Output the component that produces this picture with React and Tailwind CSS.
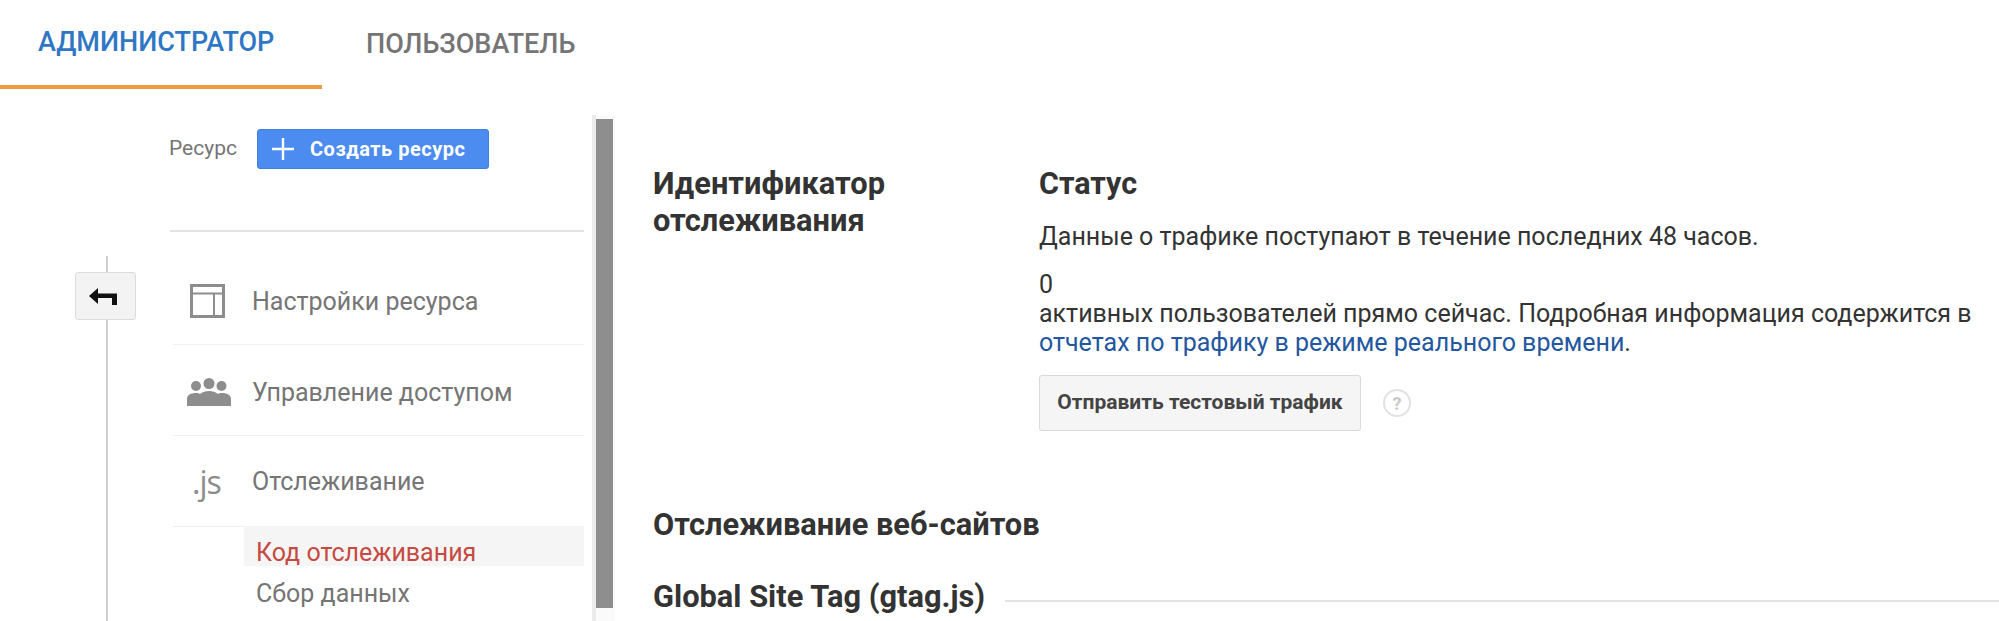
import React from "react";

function Row({ icon, label, pad, rowClass }) {
  return (
    <div className={`flex items-center border-b border-[#f0f0f0] ml-[3px] ${rowClass}`}>
      <div className={`flex w-[79px] shrink-0 justify-start ${pad}`}>{icon}</div>
      <span className="text-[25px] text-[#757575]">{label}</span>
    </div>
  );
}

export default function App() {
  return (
    <div className="font-['Roboto',sans-serif] h-[621px] w-[1999px] overflow-hidden bg-white">
      <div className="flex h-[89px]">
        <div className="flex h-[89px] w-[322px] items-center border-b-4 border-[#ed9d3e] pl-[38px] text-[27px] font-medium text-[#2f77c4]">
          АДМИНИСТРАТОР
        </div>
        <div className="flex h-[89px] items-center pl-[44px] text-[27px] font-medium text-[#757575]">
          ПОЛЬЗОВАТЕЛЬ
        </div>
      </div>

      <div className="flex h-[532px]">
        <div className="flex w-[170px] shrink-0 flex-col items-start pl-[75px] pt-[167px]">
          <div className="ml-[31px] h-[16px] w-[2px] shrink-0 bg-[#d0d0d0]" />
          <div className="flex h-[48px] w-[61px] shrink-0 items-center justify-center rounded-[3px] border border-[#dcdcdc] bg-[#f3f3f3]">
            <svg width="28" height="17" viewBox="0 0 28 17" className="mr-[6px]">
              <path d="M0 8 L9 0 V5.5 H28 V17 H23 V10 H9 V16 Z" fill="#111" />
            </svg>
          </div>
          <div className="ml-[31px] h-[400px] w-[2px] shrink-0 bg-[#d0d0d0]" />
        </div>

        <div className="w-[414px] shrink-0">
          <div className="flex h-[143px] flex-col border-b-2 border-[#e3e3e3]">
            <div className="flex items-center pt-[40px]">
              <span className="-ml-[1px] w-[88px] text-[21px] text-[#757575]">Ресурс</span>
              <div className="flex h-[40px] w-[232px] items-center rounded-[3px] border border-[#3f7fdd] bg-[#4c8bf0] pl-[13px]">
                <svg width="24" height="24" viewBox="0 0 24 24" className="shrink-0">
                  <path d="M12 1V23M1 12H23" stroke="#fff" strokeWidth="2.4" />
                </svg>
                <span className="ml-[15px] text-[20px] font-bold tracking-[0.5px] text-white">
                  Создать ресурс
                </span>
              </div>
            </div>
          </div>

          <Row
            rowClass="h-[113px] pt-[27px]"
            pad="pl-[17px]"
            label="Настройки ресурса"
            icon={
              <svg width="35" height="34" viewBox="0 0 35 34" className="-mt-[1px]">
                <path d="M1.5 1.5H33.5V32.5H1.5Z" fill="none" stroke="#8d8d8d" strokeWidth="3" />
                <path d="M2 9.5H33M24 9.5V32" fill="none" stroke="#8d8d8d" strokeWidth="2" />
              </svg>
            }
          />
          <Row
            rowClass="h-[91px] pt-[5px]"
            pad="pl-[14px]"
            label="Управление доступом"
            icon={
              <svg width="44" height="28" viewBox="0 0 44 28" className="-mt-[2px]">
                <circle cx="9" cy="8" r="5" fill="#8d8d8d" />
                <circle cx="22" cy="5.5" r="5.5" fill="#8d8d8d" />
                <circle cx="34.5" cy="8" r="5" fill="#8d8d8d" />
                <path d="M0 28V21C0 17 4 15 9 15C11 15 12 15.5 13 16C15 14 19 13 22 13C25 13 29 14 31 16C32 15.5 33 15 35 15C40 15 44 17 44 21V28Z" fill="#8d8d8d" />
              </svg>
            }
          />
          <Row
            rowClass="h-[91px] pt-[2px]"
            pad="pl-[19px]"
            label="Отслеживание"
            icon={<span className="font-['Open_Sans',sans-serif] text-[32px] leading-none tracking-[-1px] text-[#8d8d8d]">.js</span>}
          />

          <div className="-mt-[1px] ml-[74px] flex h-[40px] items-end bg-[#f5f5f5] pl-[12px]">
            <span className="text-[25px] leading-[26px] text-[#c64a42]">Код отслеживания</span>
          </div>
          <div className="ml-[86px] mt-[15px] text-[25px] leading-[26px] text-[#757575]">Сбор данных</div>
        </div>

        <div className="ml-[8px] w-[23px] shrink-0 pt-[26px]">
          <div className="h-full border-l-4 border-[#ececec] bg-[#fafafa] pt-[4px]">
            <div className="h-[489px] w-[17px] bg-[#8e8e8e]" />
          </div>
        </div>

        <div className="min-w-0 flex-1 pl-[38px]">
          <div className="flex pt-[75px]">
            <div className="w-[386px] shrink-0 pt-[1px] text-[30.8px] font-bold leading-[37px] text-[#333]">
              Идентификатор
              <br />
              отслеживания
            </div>
            <div className="w-[950px] shrink-0">
              <div className="text-[30.5px] font-bold leading-[39px] text-[#333]">Статус</div>
              <div className="mt-[19px] text-[25px] leading-[29px] text-[#333]">
                Данные о трафике поступают в течение последних 48 часов.
              </div>
              <div className="mt-[19px] text-[25px] leading-[29px] text-[#333]">
                0
                <br />
                активных пользователей прямо сейчас. Подробная информация содержится в
                <br />
                <span className="text-[#23579f]">отчетах по трафику в режиме реального времени</span>.
              </div>
              <div className="mt-[18px] flex items-center">
                <div className="flex h-[56px] w-[322px] items-center justify-center rounded-[3px] border border-[#d9d9d9] bg-[#f5f5f5] text-[21px] font-bold text-[#444]">
                  Отправить тестовый трафик
                </div>
                <div className="ml-[22px] flex h-[28px] w-[28px] items-center justify-center rounded-full border-2 border-[#e2e2e2] text-[18px] font-bold text-[#c8c8c8]">
                  ?
                </div>
              </div>
            </div>
          </div>
          <div className="mt-[74px] text-[30.8px] font-bold leading-[39px] text-[#333]">Отслеживание веб-сайтов</div>
          <div className="mt-[33px] flex items-center">
            <span className="shrink-0 text-[30.8px] font-bold leading-[39px] text-[#333]">Global Site Tag (gtag.js)</span>
            <div className="ml-[20px] mt-[8px] h-[2px] flex-1 bg-[#e3e3e3]" />
          </div>
        </div>
      </div>
    </div>
  );
}
